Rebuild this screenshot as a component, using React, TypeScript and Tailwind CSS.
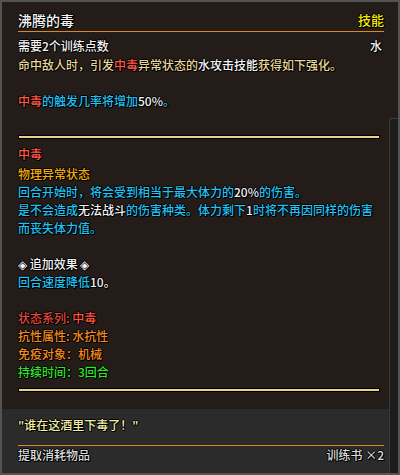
const font = "font-['Noto_Sans_CJK_SC','Noto_Sans',sans-serif] font-medium";
const shadow = "[text-shadow:1px_1px_0_#000,-1px_0_0_#000,0_-1px_0_#000,1px_0_0_#000,0_1px_0_#000]";

const red = "text-[#ff5844]";
const cyan = "text-[#22c2f2]";
const white = "text-[#f4f4f4]";
const beige = "text-[#e8d69a]";

function Divider() {
  return <div className="h-[4px] border border-black bg-[#ead28e]" />;
}

export default function App() {
  return (
    <div className={`${font} ${shadow} relative flex h-[475px] w-[400px] flex-col border-2 border-[#535353] bg-[#231c19] text-[12px]`}>
      {/* header */}
      <div className="pl-[16px] pr-[14px] pt-[7px]">
        <div className="flex h-[22px] items-center justify-between">
          <span className="text-[14px] text-[#f4f4f4]">沸腾的毒</span>
          <span className="text-[13px] text-[#f6ea00]">技能</span>
        </div>
        <div className="h-px bg-[#d98a1e]" />
        <div className="mt-[4px] flex justify-between leading-[19.5px] text-[#f4f4f4]">
          <span>需要2个训练点数</span>
          <span className="pr-[2px]">水</span>
        </div>
      </div>

      {/* body */}
      <div className="pl-[16px] pr-[18px] leading-[18px]">
        <p className={beige}>
          命中敌人时，引发<span className={red}>中毒</span>异常状态的<span className={white}>水攻击技能</span>获得如下强化。
        </p>
        <p className="h-[18px]" />
        <p className={cyan}>
          <span className={red}>中毒</span>的触发几率将增加<span className={white}>50%</span>。
        </p>

        <div className="mt-[25px]">
          <Divider />
        </div>

        <p className={`${red} mt-[5px] leading-[20px]`}>中毒</p>
        <p className="mt-[1px] text-[#f2ae08]">物理异常状态</p>
        <p className={cyan}>
          回合开始时，将会受到相当于最大体力的<span className={white}>20%</span>的伤害。
        </p>
        <p className={cyan}>
          是不会造成<span className={white}>无法战斗</span>的伤害种类。体力剩下<span className={white}>1</span>时将不再因同样的伤害
        </p>
        <p className={cyan}>而丧失体力值。</p>
        <p className="h-[18px]" />
        <p className={white}>◈ 追加效果 ◈</p>
        <p className={cyan}>
          回合速度降低<span className={white}>10。</span>
        </p>
        <p className="h-[18px]" />
        <p className="text-[#e44a3c]">
          状态系列: <span className="text-[#ff5040]">中毒</span>
        </p>
        <p className="text-[#f48c1c]">抗性属性: 水抗性</p>
        <p className="text-[#f48c1c]">免疫对象：机械</p>
        <p className="text-[#34e42a]">持续时间：3回合</p>

        <div className="mt-[7px]">
          <Divider />
        </div>
      </div>

      {/* footer */}
      <div className="mt-[17px] flex-1 bg-[#2b2b2b] pl-[16px] pr-[14px] pt-[7px] leading-[18px]">
        <p className="text-[#f2f0a6]">"谁在这酒里下毒了！"</p>
        <div className="mt-[11px] h-px bg-[#d98a1e]" />
        <div className="flex justify-between text-[#dcdcdc]">
          <span>提取消耗物品</span>
          <span>训练书 ×2</span>
        </div>
      </div>

      {/* scroll track */}
      <div className="absolute bottom-0 right-0 top-[116px] w-[9px] rounded-tl-[3px] border-l border-t border-[#3a3a3a] bg-[#1c1c1c]" />
    </div>
  );
}
